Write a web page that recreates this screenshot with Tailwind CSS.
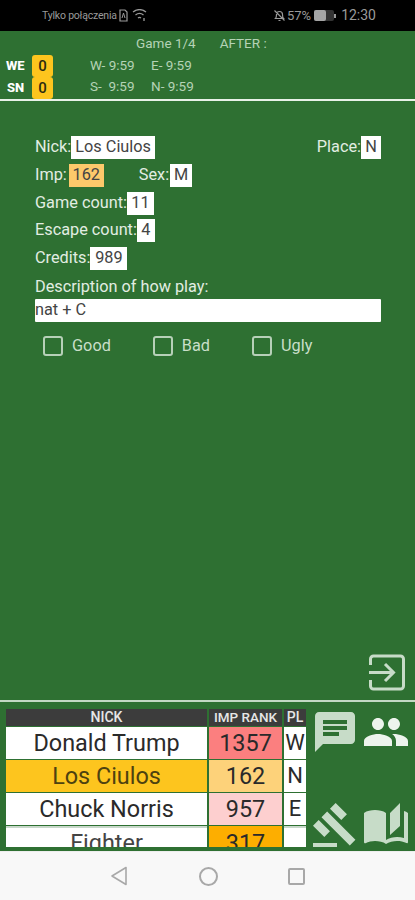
<!DOCTYPE html>
<html>
<head>
  <title>Player info</title>
  <script src="https://cdn.jsdelivr.net/npm/@tailwindcss/browser@4"></script>
</head>
<body class="m-0 bg-[#2e7032] font-['Roboto',sans-serif]">
<div class="w-[415px] h-[900px] flex flex-col overflow-hidden bg-[#2e7032]">

  <!-- status bar -->
  <div class="h-[31px] bg-black flex items-center justify-between pl-[42px] pr-[39px] text-[#9a9a9a] shrink-0">
    <div class="flex items-center">
      <span class="text-[10.5px] tracking-[-0.2px]">Tylko połączenia</span>
      <svg class="ml-[2px]" width="9" height="13" viewBox="0 0 9 13" fill="none" stroke="#9a9a9a" stroke-width="1.2"><path d="M1 1h5l2 2v9H1z"/><path d="M3 9l1.500-5L6 9" stroke-width="1"/></svg>
      <svg class="ml-[4px]" width="15" height="13" viewBox="0 0 15 13" fill="none" stroke="#9a9a9a" stroke-width="1.3"><path d="M1 3c4-3 9-3 13 0M3.500 6c2.500-2 5.500-2 8 0M6 9c1-.8 2-.8 3 0M12 9v3"/></svg>
    </div>
    <div class="flex items-center">
      <svg width="13" height="13" viewBox="0 0 13 13" fill="none" stroke="#9a9a9a" stroke-width="1.2"><path d="M2.500 9.500c1-1 1-2 1-4a3 3 0 0 1 6 0c0 2 0 3 1 4zM5.500 11.500h2M1.500 1.500l10 10"/></svg>
      <span class="ml-[1px] text-[13px]">57%</span>
      <div class="ml-[3px] w-[20px] h-[11px] rounded-[2px] bg-[#333] flex"><div class="w-[12px] h-full bg-[#a5a5a5] rounded-[2px]"></div></div>
      <div class="w-[2px] h-[4px] bg-[#9a9a9a]"></div>
      <span class="ml-[5px] text-[14px]">12:30</span>
    </div>
  </div>

  <!-- score header -->
  <div class="h-[70px] shrink-0 border-b-2 border-[#e8f1e8] flex flex-col">
    <div class="h-[24px] flex items-center text-[13.5px] text-[#b5d3b6]">
      <span class="ml-[136px]">Game 1/4</span>
      <span class="ml-[24px]">AFTER :</span>
    </div>
    <div class="flex">
      <div class="w-[32px] pl-[6px] flex flex-col text-[13px] font-extrabold text-white gap-[4px] pt-[2px]">
        <span class="h-[18px] leading-[18px]">WE</span>
        <span class="h-[18px] leading-[18px] ml-[1px]">SN</span>
      </div>
      <div class="w-[21px] flex flex-col">
        <div class="h-[22px] bg-[#fdc51e] rounded-[3px] text-[15px] font-medium text-[#2b2b10] flex items-center justify-center">0</div>
        <div class="h-[22px] bg-[#fdc51e] rounded-[3px] text-[15px] font-medium text-[#2b2b10] flex items-center justify-center">0</div>
      </div>
      <div class="ml-[37px] text-[13.5px] text-[#b5d3b6]">
        <div class="h-[21px] flex items-center"><span class="w-[61px]">W- 9:59</span><span>E- 9:59</span></div>
        <div class="h-[21px] flex items-center"><span class="w-[61px]">S-&nbsp; 9:59</span><span>N- 9:59</span></div>
      </div>
    </div>
  </div>

  <!-- player form -->
  <div class="flex-1 flex flex-col pl-[35px] pr-[34px] pt-[35px] text-[16.3px] text-[#e2ede2]">
    <div class="flex items-center h-[23px] justify-between">
      <div class="flex items-center">
        <span>Nick:</span>
        <span class="h-[23px] px-[4px] bg-white text-[#444] flex items-center">Los Ciulos</span>
      </div>
      <div class="flex items-center">
        <span>Place:</span>
        <span class="h-[23px] w-[20px] bg-white text-[#444] flex items-center justify-center">N</span>
      </div>
    </div>
    <div class="flex items-center h-[23px] mt-[5px]">
      <span class="mr-[2px]">Imp:</span>
      <span class="h-[23px] w-[35px] bg-[#fdc96b] text-[#444] flex items-center justify-center">162</span>
      <span class="ml-[35px] mr-[1px]">Sex:</span>
      <span class="h-[23px] w-[22px] bg-white text-[#444] flex items-center justify-center">M</span>
    </div>
    <div class="flex items-center h-[23px] mt-[5px]">
      <span>Game count:</span>
      <span class="h-[23px] w-[27px] bg-white text-[#444] flex items-center justify-center">11</span>
    </div>
    <div class="flex items-center h-[23px] mt-[4px]">
      <span>Escape count:</span>
      <span class="h-[23px] w-[18px] bg-white text-[#444] flex items-center justify-center">4</span>
    </div>
    <div class="flex items-center h-[23px] mt-[5px]">
      <span>Credits:</span>
      <span class="h-[23px] w-[37px] bg-white text-[#444] flex items-center justify-center">989</span>
    </div>
    <div class="h-[19px] mt-[8px] flex items-center">Description of how play:</div>
    <div class="h-[23px] mt-[2px] bg-white text-[#444] flex items-center rounded-[1px]">nat + C</div>
    <div class="flex items-center h-[22px] mt-[13px] text-[#c9dfc9]">
      <div class="ml-[8px] w-[20px] h-[20px] border-2 border-[#b7d0b8] rounded-[3px]"></div>
      <span class="ml-[9px]">Good</span>
      <div class="ml-[42px] w-[20px] h-[20px] border-2 border-[#b7d0b8] rounded-[3px]"></div>
      <span class="ml-[9px]">Bad</span>
      <div class="ml-[42px] w-[20px] h-[20px] border-2 border-[#b7d0b8] rounded-[3px]"></div>
      <span class="ml-[9px]">Ugly</span>
    </div>
    <div class="mt-auto mb-[9px] flex justify-end">
      <svg width="36" height="37" viewBox="0 0 36 37" fill="none" stroke="#c7dcc8" stroke-width="3" class="mr-[-24px]">
        <path d="M1.500 11V5a3 3 0 0 1 3-3h27a3 3 0 0 1 3 3v27a3 3 0 0 1-3 3h-27a3 3 0 0 1-3-3v-6"/>
        <path d="M0 18.500h24M16 10l8.500 8.500L16 27"/>
      </svg>
    </div>
  </div>

  <!-- players table and actions -->
  <div class="h-[151px] shrink-0 border-t-2 border-[#c3d9c4] flex pt-[7px] pl-[6px]">
    <div class="w-[300px] h-[138px] overflow-hidden flex gap-[2px]">
      <div class="w-[201px] shrink-0 flex flex-col gap-[1px] text-center text-[23.4px] text-[#2a2a2a]">
        <div class="h-[17px] bg-[#3c3c3c] text-[#e6e6e6] text-[14px] font-medium leading-[17px]">NICK</div>
        <div class="h-[32px] leading-[32px] bg-white">Donald Trump</div>
        <div class="h-[32px] leading-[32px] bg-[#fdc51e] text-[#4d4210]">Los Ciulos</div>
        <div class="h-[32px] leading-[32px] bg-white">Chuck Norris</div>
        <div class="h-[33px] leading-[31px] bg-white border-t-2 border-[#c8d8ca] text-[#444]">Fighter</div>
      </div>
      <div class="w-[73px] shrink-0 flex flex-col gap-[1px] text-center text-[23.4px] text-[#2a2a2a]">
        <div class="h-[17px] bg-[#3c3c3c] text-[#e6e6e6] text-[13.5px] font-medium leading-[17px] whitespace-nowrap">IMP RANK</div>
        <div class="h-[32px] leading-[32px] bg-[#fb7f7f]">1357</div>
        <div class="h-[32px] leading-[32px] bg-[#fdd27a]">162</div>
        <div class="h-[32px] leading-[32px] bg-[#fdcfcf]">957</div>
        <div class="h-[33px] leading-[31px] bg-[#fdae00] border-t-2 border-[#fdae00]">317</div>
      </div>
      <div class="w-[22px] shrink-0 flex flex-col gap-[1px] text-center text-[22px] text-[#2a2a2a]">
        <div class="h-[17px] bg-[#3c3c3c] text-[#e6e6e6] text-[14px] font-medium leading-[17px]">PL</div>
        <div class="h-[32px] leading-[32px] bg-white">W</div>
        <div class="h-[32px] leading-[32px] bg-white">N</div>
        <div class="h-[32px] leading-[32px] bg-white">E</div>
        <div class="h-[33px] bg-white border-t-2 border-[#c8d8ca]"></div>
      </div>
    </div>
    <div class="w-[99px] h-[141px] ml-[5px] mt-[-1px] flex flex-col justify-between shrink-0">
      <div class="flex justify-between">
        <svg width="48" height="48" viewBox="0 0 24 24" fill="#c7dcc8"><path d="M20 2H4c-1.100 0-1.990.900-1.990 2L2 22l4-4h14c1.100 0 2-.900 2-2V4c0-1.100-.900-2-2-2zM6 9h12v2H6V9zm8 5H6v-2h8v2zm4-6H6V6h12v2z"/></svg>
        <svg width="48" height="48" viewBox="0 0 24 24" fill="#edf4ed"><path d="M16 11c1.660 0 2.990-1.340 2.990-3S17.660 5 16 5c-1.660 0-3 1.340-3 3s1.340 3 3 3zm-8 0c1.660 0 2.990-1.340 2.990-3S9.660 5 8 5C6.340 5 5 6.340 5 8s1.340 3 3 3zm0 2c-2.330 0-7 1.170-7 3.500V19h14v-2.500c0-2.330-4.670-3.500-7-3.500zm8 0c-.290 0-.620.020-.970.050 1.160.840 1.970 1.970 1.970 3.450V19h6v-2.500c0-2.330-4.670-3.500-7-3.500z"/></svg>
      </div>
      <div class="flex justify-between">
        <svg width="48" height="48" viewBox="0 0 24 24" fill="#c7dcc8"><path d="M1 21h12v2H1zM5.245 8.070l2.830-2.827 14.140 14.142-2.828 2.828zM12.317 1l5.657 5.656-2.830 2.830-5.654-5.660zM3.825 9.485l5.657 5.657-2.828 2.828-5.657-5.657z"/></svg>
        <svg width="48" height="48" viewBox="0 0 24 24" fill="#c7dcc8"><path d="M19 1l-5 5v11l5-4.500V1zM1 6v14.650c0 .250.250.500.500.500.100 0 .150-.050.250-.050C3.100 20.450 5.050 20 6.500 20c1.950 0 4.050.400 5.500 1.500V6c-1.450-1.100-3.550-1.500-5.500-1.500S2.450 4.900 1 6zm22 13.500V6c-.600-.450-1.250-.750-2-1v13.500c-1.100-.350-2.300-.500-3.500-.500-1.700 0-4.150.650-5.500 1.500v2c1.350-.850 3.800-1.500 5.500-1.500 1.650 0 3.350.300 4.750 1.050.100.050.150.050.250.050.250 0 .500-.250.500-.500v-1.100z"/></svg>
      </div>
    </div>
  </div>

  <!-- android nav bar -->
  <div class="h-[49px] shrink-0 bg-[#f8f8f8] flex items-center border-t border-[#eeeeee]">
    <svg class="ml-[110px]" width="18" height="20" viewBox="0 0 18 20" fill="none" stroke="#a8a8a8" stroke-width="1.600" stroke-linejoin="round"><path d="M16 1.500v17L2 10z"/></svg>
    <div class="ml-[71px] w-[19px] h-[19px] rounded-full border-2 border-[#a8a8a8]"></div>
    <div class="ml-[70px] w-[17px] h-[17px] rounded-[2px] border-2 border-[#a8a8a8]"></div>
  </div>
</div>
</body>
</html>
